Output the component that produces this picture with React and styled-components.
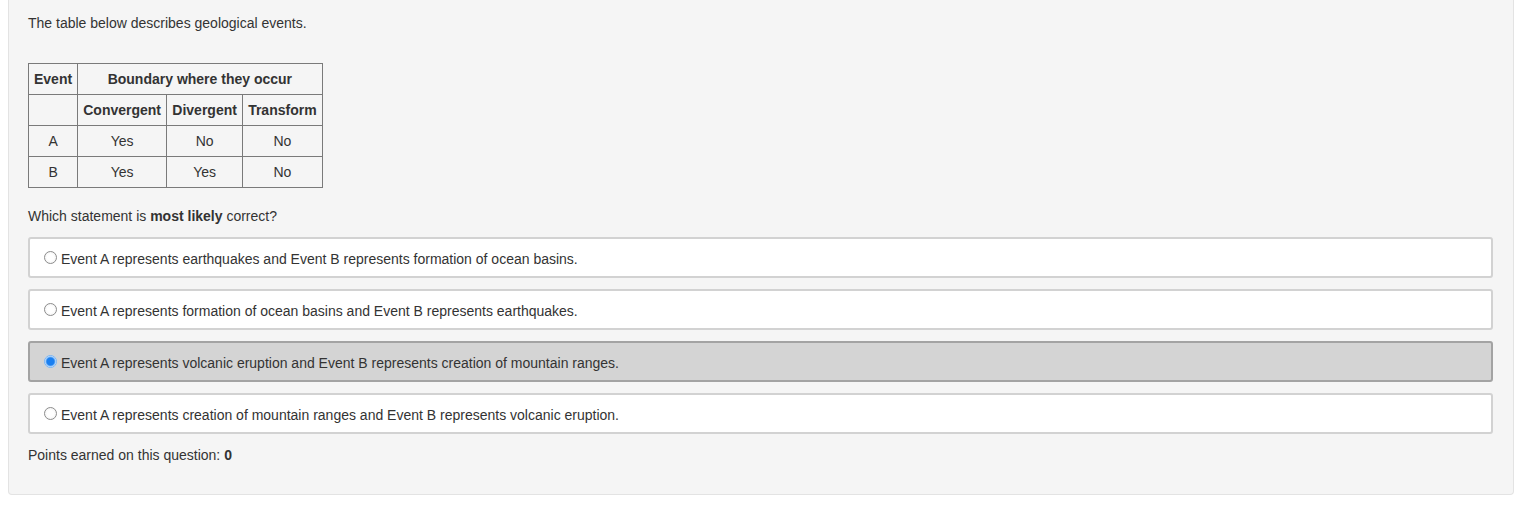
import React from 'react';
import styled, { createGlobalStyle } from 'styled-components';

const GlobalStyle = createGlobalStyle`
  body {
    margin: 0;
    background: #ffffff;
    font-family: 'Liberation Sans', Arial, Helvetica, sans-serif;
    font-size: 14px;
    line-height: 20px;
    color: #333333;
  }
`;

const Panel = styled.div`
  margin: 0 21px 0 8px;
  padding: 13px 20px 29px 19px;
  background-color: #f5f5f5;
  border: 1px solid #e3e3e3;
  border-top: none;
  border-radius: 0 0 4px 4px;
`;

const Paragraph = styled.p`
  margin: 0 0 ${(p) => p.gap || 0}px 0;
`;

const Table = styled.table`
  border-collapse: collapse;
  border: 1px solid #444;
  margin-bottom: 18px;
`;

const Cell = styled.td`
  border: 1px solid #7a7a7a;
  height: 31px;
  padding: 0 5px;
  text-align: center;
  font-weight: ${(p) => (p.head ? 700 : 400)};
  box-sizing: border-box;
`;

const Options = styled.div`
  display: flex;
  flex-direction: column;
  gap: 11px;
  margin: 11px 0;
`;

const Option = styled.label`
  display: flex;
  align-items: center;
  gap: 4px;
  height: 41px;
  box-sizing: border-box;
  padding: 2px 14px 0;
  border: 2px solid ${(p) => (p.selected ? '#a3a3a3' : '#d2d2d2')};
  border-radius: 3px;
  background-color: ${(p) => (p.selected ? '#d4d4d4' : '#ffffff')};
  cursor: pointer;
`;

const Radio = styled.span`
  width: 13px;
  height: 13px;
  box-sizing: border-box;
  border-radius: 50%;
  flex-shrink: 0;
  margin-top: -2px;
  border: 1px solid ${(p) => (p.checked ? '#7ab6f5' : '#8c8c8c')};
  background: ${(p) =>
    p.checked
      ? 'radial-gradient(circle, #1a7ff0 0 3.5px, #3d94f2 4px, #d8e9fc 5.5px)'
      : 'radial-gradient(circle, #ffffff 0 3px, #f4f4f4 6px)'};
`;

const options = [
  'Event A represents earthquakes and Event B represents formation of ocean basins.',
  'Event A represents formation of ocean basins and Event B represents earthquakes.',
  'Event A represents volcanic eruption and Event B represents creation of mountain ranges.',
  'Event A represents creation of mountain ranges and Event B represents volcanic eruption.',
];

const rows = [
  ['A', 'Yes', 'No', 'No'],
  ['B', 'Yes', 'Yes', 'No'],
];

const App = () => {
  const selected = 2;
  return (
    <>
      <GlobalStyle />
      <Panel>
        <Paragraph gap={30}>The table below describes geological events.</Paragraph>
        <Table>
          <tbody>
            <tr>
              <Cell head style={{ width: 49 }}>Event</Cell>
              <Cell head colSpan={3}>Boundary where they occur</Cell>
            </tr>
            <tr>
              <Cell />
              <Cell head style={{ width: 89 }}>Convergent</Cell>
              <Cell head style={{ width: 76 }}>Divergent</Cell>
              <Cell head style={{ width: 79 }}>Transform</Cell>
            </tr>
            {rows.map((r) => (
              <tr key={r[0]}>
                {r.map((c, i) => (
                  <Cell key={i}>{c}</Cell>
                ))}
              </tr>
            ))}
          </tbody>
        </Table>
        <Paragraph>
          Which statement is <b>most likely</b> correct?
        </Paragraph>
        <Options>
          {options.map((o, i) => (
            <Option key={i} selected={i === selected}>
              <Radio checked={i === selected} />
              {o}
            </Option>
          ))}
        </Options>
        <Paragraph>
          Points earned on this question: <b>0</b>
        </Paragraph>
      </Panel>
    </>
  );
};

export default App;
